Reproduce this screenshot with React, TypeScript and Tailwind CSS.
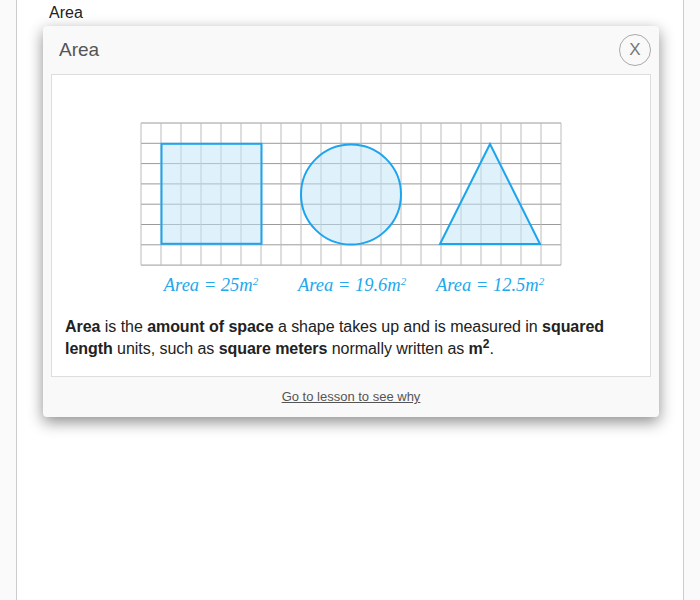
import React from "react"

const cols = Array.from({ length: 22 }, (_, i) => 10 + i * 20)
const rows = Array.from({ length: 8 }, (_, i) => 10 + i * 20.3)

const AreaFigure = () => {
  return (
    <svg width="440" height="185" viewBox="0 0 440 185" className="mx-auto block">
      {rows.map((y) => (
        <line key={"r" + y} x1="10" x2="430" y1={y} y2={y} stroke="#9a9a9a" strokeWidth="1" />
      ))}
      {cols.map((x) => (
        <line key={"c" + x} x1={x} x2={x} y1="10" y2="152" stroke="#bcbcbc" strokeWidth="1" />
      ))}
      <rect x="30.5" y="30.8" width="100" height="100" fill="#bfe4f8" fillOpacity="0.5" stroke="#1da4ef" strokeWidth="2" />
      <circle cx="220" cy="81.5" r="50" fill="#bfe4f8" fillOpacity="0.5" stroke="#1da4ef" strokeWidth="2" />
      <polygon points="359,31 309,131 409,131" fill="#bfe4f8" fillOpacity="0.5" stroke="#1da4ef" strokeWidth="2" strokeLinejoin="miter" />
      <g fill="#22a8ec" fontFamily="'Liberation Serif', serif" fontStyle="italic" fontSize="18.5" textAnchor="middle">
        <text x="80" y="178">
          Area = 25m<tspan fontSize="11" dy="-6">2</tspan>
        </text>
        <text x="221" y="178">
          Area = 19.6m<tspan fontSize="11" dy="-6">2</tspan>
        </text>
        <text x="359" y="178">
          Area = 12.5m<tspan fontSize="11" dy="-6">2</tspan>
        </text>
      </g>
    </svg>
  )
}

const AreaModal = () => {
  return (
    <div className="absolute left-[43px] top-[26px] w-[616px] rounded-[4px] bg-[#f9f9f9] shadow-[0_5px_15px_rgba(0,0,0,0.45)]">
      <div className="flex h-[48px] items-center justify-between px-2">
        <h2 className="pl-2 text-[19px] text-[#555]">Area</h2>
        <button className="flex h-[32px] w-[32px] items-center justify-center rounded-full border border-[#aaa] text-[17px] text-[#777]">
          X
        </button>
      </div>
      <div className="mx-2 border border-[#ddd] bg-white pt-[38px] pb-[16px]">
        <AreaFigure />
        <p className="mt-[18px] px-[13px] text-[16px] leading-[22px] tracking-[-0.05px] text-[#222]">
          <b>Area</b> is the <b>amount of space</b> a shape takes up and is measured in{" "}
          <b>squared length</b> units, such as <b>square meters</b> normally written as{" "}
          <b>
            m<sup className="text-[12px]">2</sup>
          </b>
          .
        </p>
      </div>
      <div className="flex h-[40px] items-center justify-center">
        <a className="text-[13px] text-[#555] underline">Go to lesson to see why</a>
      </div>
    </div>
  )
}

export default function App() {
  return (
    <div className="relative min-h-[600px] bg-[#fafafa] font-['Liberation_Sans',Arial,sans-serif]">
      <div className="mx-[16px] min-h-[600px] border-x border-[#ccc] bg-white">
        <p className="pl-[32px] pt-[3px] text-[16px] leading-[20px] text-[#222]">Area</p>
      </div>
      <AreaModal />
    </div>
  )
}
